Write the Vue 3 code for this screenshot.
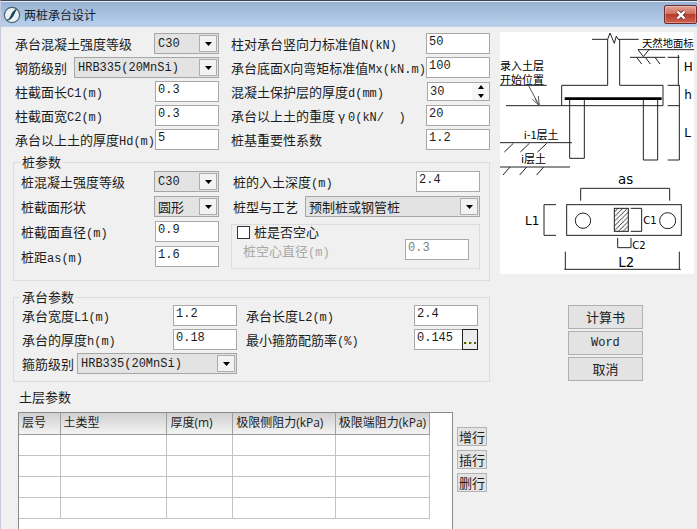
<script setup>
import { h, ref } from 'vue'

// Splits a caption so that Chinese, Latin and Greek runs can be sized separately.
const Caption = (props) => {
  const runs = props.text.match(/γ|[\x20-\x7e]+|[^\x20-\x7eγ]+/g) || []
  return h(
    props.tag || 'label',
    { class: 'caption' },
    runs.map((run) => {
      if (run === 'γ') return h('span', { class: 'greek' }, run)
      return /^[\x20-\x7e]/.test(run) ? h('span', { class: 'latin' }, run) : run
    })
  )
}
Caption.props = ['text', 'tag']

const leftInputs = ref([
  { id: 'c1', label: '柱截面长C1(m)', value: '0.3' },
  { id: 'c2', label: '柱截面宽C2(m)', value: '0.3' },
  { id: 'hd', label: '承台以上土的厚度Hd(m)', value: '5' },
])
const loadInputs = ref([
  { id: 'n', label: '柱对承台竖向力标准值N(kN)', value: '50' },
  { id: 'mx', label: '承台底面X向弯矩标准值Mx(kN.m)', value: '100' },
])
const cover = ref(30)
const factorInputs = ref([
  { id: 'gamma', label: '承台以上土的重度γ0(kN/  )', value: '20' },
  { id: 'importance', label: '桩基重要性系数', value: '1.2' },
])
const pileInputs = ref([
  { id: 'diameter', label: '桩截面直径(m)', value: '0.9' },
  { id: 'spacing', label: '桩距as(m)', value: '1.6' },
])
const capInputs = ref([
  { id: 'l1', label: '承台宽度L1(m)', value: '1.2' },
  { id: 'h', label: '承台的厚度h(m)', value: '0.18' },
])
const depth = ref('2.4')
const hollow = ref(false)
const hollowDiameter = ref('0.3')
const capLength = ref('2.4')
const ratio = ref('0.145')

const columns = ['层号', '土类型', '厚度(m)', '极限侧阻力(kPa)', '极限端阻力(kPa)']
const rows = ref([1, 2, 3, 4])
let nextRow = 5
const addRow = () => rows.value.push(nextRow++)
const insertRow = () => rows.value.unshift(nextRow++)
const removeRow = () => rows.value.pop()
</script>

<template>
  <div class="window">
    <header class="titlebar">
      <svg class="app-icon" viewBox="0 0 18 18" aria-hidden="true">
        <circle cx="9" cy="9" r="7.6" fill="#e9f1f4" stroke="#4c6470" stroke-width="1.2" />
        <path d="M4 14.2C8.6 13 7.6 5.4 13.6 3.2C10.8 6.4 10.6 13.4 4 14.2Z" fill="#17414f" stroke="#17414f" stroke-width=".8" />
      </svg>
      <h1>两桩承台设计</h1>
      <button type="button" class="close" aria-label="关闭">
        <svg viewBox="0 0 14 12" aria-hidden="true">
          <path d="M3.5 2.5L10.5 9.5M10.5 2.5L3.5 9.5" stroke="#6b3a38" stroke-width="4.2" />
          <path d="M3.5 2.5L10.5 9.5M10.5 2.5L3.5 9.5" stroke="#fff" stroke-width="2.4" />
        </svg>
      </button>
    </header>

    <main class="body">
      <form class="form" @submit.prevent>
        <section class="pair general">
          <div class="stack">
            <div class="row">
              <Caption text="承台混凝土强度等级" for="grade" />
              <span class="combo short">
                <select id="grade"><option>C30</option></select>
                <i class="arrow"><svg viewBox="0 0 7 4"><path d="M0 0H7L3.5 4Z" /></svg></i>
              </span>
            </div>
            <div class="row">
              <Caption text="钢筋级别" for="steel" />
              <span class="combo">
                <select id="steel"><option>HRB335(20MnSi)</option></select>
                <i class="arrow"><svg viewBox="0 0 7 4"><path d="M0 0H7L3.5 4Z" /></svg></i>
              </span>
            </div>
            <div v-for="f in leftInputs" :key="f.id" class="row">
              <Caption :text="f.label" :for="f.id" />
              <input :id="f.id" v-model="f.value" class="field" type="text" />
            </div>
          </div>
          <div class="stack">
            <div v-for="f in loadInputs" :key="f.id" class="row">
              <Caption :text="f.label" :for="f.id" />
              <input :id="f.id" v-model="f.value" class="field" type="text" />
            </div>
            <div class="row">
              <Caption text="混凝土保护层的厚度d(mm)" for="cover" />
              <span class="spin">
                <input id="cover" v-model="cover" type="text" />
                <span class="steps">
                  <button type="button" aria-label="增加" @click="cover++"><svg viewBox="0 0 6 4"><path d="M0 4H6L3 0Z" /></svg></button>
                  <button type="button" aria-label="减少" @click="cover--"><svg viewBox="0 0 6 4"><path d="M0 0H6L3 4Z" /></svg></button>
                </span>
              </span>
            </div>
            <div v-for="f in factorInputs" :key="f.id" class="row">
              <Caption :text="f.label" :for="f.id" />
              <input :id="f.id" v-model="f.value" class="field" type="text" />
            </div>
          </div>
        </section>

        <fieldset class="group pile">
          <legend>桩参数</legend>
          <div class="pair">
            <div class="stack">
              <div class="row">
                <Caption text="桩混凝土强度等级" for="pile-grade" />
                <span class="combo short">
                  <select id="pile-grade"><option>C30</option></select>
                  <i class="arrow"><svg viewBox="0 0 7 4"><path d="M0 0H7L3.5 4Z" /></svg></i>
                </span>
              </div>
              <div class="row">
                <Caption text="桩截面形状" for="shape" />
                <span class="combo short han">
                  <select id="shape"><option>圆形</option></select>
                  <i class="arrow"><svg viewBox="0 0 7 4"><path d="M0 0H7L3.5 4Z" /></svg></i>
                </span>
              </div>
              <div v-for="f in pileInputs" :key="f.id" class="row">
                <Caption :text="f.label" :for="f.id" />
                <input :id="f.id" v-model="f.value" class="field" type="text" />
              </div>
            </div>
            <div class="stack">
              <div class="row indent">
                <Caption text="桩的入土深度(m)" for="depth" />
                <input id="depth" v-model="depth" class="field" type="text" />
              </div>
              <div class="row indent">
                <Caption text="桩型与工艺" for="craft" />
                <span class="combo han">
                  <select id="craft"><option>预制桩或钢管桩</option></select>
                  <i class="arrow"><svg viewBox="0 0 7 4"><path d="M0 0H7L3.5 4Z" /></svg></i>
                </span>
              </div>
              <div class="hollow">
                <div class="check">
                  <input id="hollow" v-model="hollow" type="checkbox" />
                  <Caption text="桩是否空心" for="hollow" />
                </div>
                <div class="row off">
                  <Caption text="桩空心直径(m)" for="hollow-d" />
                  <input id="hollow-d" v-model="hollowDiameter" class="field" type="text" :disabled="!hollow" />
                </div>
              </div>
            </div>
          </div>
        </fieldset>

        <fieldset class="group cap">
          <legend>承台参数</legend>
          <div class="pair">
            <div class="stack">
              <div v-for="f in capInputs" :key="f.id" class="row">
                <Caption :text="f.label" :for="f.id" />
                <input :id="f.id" v-model="f.value" class="field" type="text" />
              </div>
              <div class="row">
                <Caption text="箍筋级别" for="stirrup" />
                <span class="combo">
                  <select id="stirrup"><option>HRB335(20MnSi)</option></select>
                  <i class="arrow"><svg viewBox="0 0 7 4"><path d="M0 0H7L3.5 4Z" /></svg></i>
                </span>
              </div>
            </div>
            <div class="stack">
              <div class="row">
                <Caption text="承台长度L2(m)" for="l2" />
                <input id="l2" v-model="capLength" class="field" type="text" />
              </div>
              <div class="row">
                <Caption text="最小箍筋配筋率(%)" for="ratio" />
                <span class="browse">
                  <input id="ratio" v-model="ratio" class="field" type="text" />
                  <button type="button" aria-label="选择">
                    <svg viewBox="0 0 12 3" aria-hidden="true">
                      <path d="M0 0H2V2H0ZM5 0H7V2H5ZM10 0H12V2H10Z" fill="#4c5a10" />
                      <path d="M2 0H3V2H2ZM7 0H8V2H7Z" fill="#c9d23c" />
                    </svg>
                  </button>
                </span>
              </div>
            </div>
          </div>
        </fieldset>

        <section class="soil">
          <h2>土层参数</h2>
          <div class="soil-row">
            <div class="sheet">
              <table>
                <colgroup>
                  <col class="w-no" /><col class="w-type" /><col class="w-thick" /><col class="w-side" /><col class="w-end" />
                </colgroup>
                <thead>
                  <tr><th v-for="c in columns" :key="c" scope="col">{{ c }}</th></tr>
                </thead>
                <tbody>
                  <tr v-for="r in rows" :key="r"><td v-for="c in columns" :key="c"></td></tr>
                </tbody>
              </table>
            </div>
            <div class="row-tools">
              <button type="button" @click="addRow">增行</button>
              <button type="button" @click="insertRow">插行</button>
              <button type="button" @click="removeRow">删行</button>
            </div>
          </div>
        </section>
      </form>

      <aside class="side">
        <svg class="diagram" viewBox="15 96 582 726" role="img" aria-label="两桩承台示意图">
          <defs>
            <pattern id="hatch" width="14" height="14" patternUnits="userSpaceOnUse">
              <path d="M-2 16L16 -2M-2 2L2 -2M12 16L16 12" stroke="#222" stroke-width="2.6" />
              <path d="M7 7v3M2 3h2" stroke="#666" stroke-width="2" />
            </pattern>
          </defs>
          <g class="lines">
            <path d="M291 118H338L345 99L358 130L364 108L369 118H431" />
            <path d="M338 118V256H200V317M374 118V256H504V317M33 317H504" />
            <path d="M209 296H500" class="bar" />
            <path d="M224 300V475H268V300M445 300V480H488V300" />
            <path d="M429 149H597M429 149L445 170L462 149M405 172H511" />
            <path d="M425 172L440 192M451 172L466 192M480 172L495 192" />
            <path d="M518 172H554M550 165V256M518 256H554M518 317H554M553 256V480H518" />
            <path d="M15 256H155" />
            <path d="M100 256L133 317M112 298L133 317L130 288M120 296L133 317" class="pointer" />
            <path d="M15 428H231M55 430L28 456M103 430L76 456M155 430L128 456" />
            <path d="M15 501H225M45 501L24 525M95 501L74 525M146 501L125 525" />
            <path d="M257 602V565H524V602" />
            <rect x="215" y="614" width="344" height="92" />
            <circle cx="264" cy="662" r="23" />
            <circle cx="518" cy="662" r="24" />
            <rect x="358" y="625" width="42" height="69" class="hatched" />
            <path d="M407 625H440V694H407" />
            <path d="M183 614H147V706H183" />
            <path d="M368 714V743H408V714" />
            <path d="M211 755V808M553 755V808M208 808H557" />
          </g>
          <g class="han-note">
            <text x="441" y="142" class="ground">天然地面标</text>
            <text x="15" y="209">录入土层</text>
            <text x="15" y="253">开始位置</text>
            <text x="86" y="416">i-1层土</text>
            <text x="78" y="488">i层土</text>
          </g>
          <g class="dim">
            <text x="566" y="214">H</text>
            <text x="568" y="297">h</text>
            <text x="568" y="411">L</text>
            <text x="369" y="553" class="wide">as</text>
            <text x="90" y="675">L1</text>
            <text x="370" y="800" class="wide">L2</text>
            <text x="445" y="671" class="small">C1</text>
            <text x="412" y="746" class="small">C2</text>
          </g>
        </svg>
        <div class="actions">
          <button type="button">计算书</button>
          <button type="button" class="word">Word</button>
          <button type="button">取消</button>
        </div>
      </aside>
    </main>
  </div>
</template>

<style>
body {
  margin: 0;
  background: #f0f0f0;
}
</style>

<style scoped>
.window {
  --han: "Noto Sans CJK SC", sans-serif;
  --mono: "Liberation Mono", "Noto Sans CJK SC", monospace;
  box-sizing: border-box;
  min-height: 100vh;
  display: flex;
  flex-direction: column;
  border-top: 1px solid #3c4450;
  border-left: 1px solid #c5cbdc;
  background: #f0f0f0;
  color: #1c1c1c;
  font: 13px/20px var(--han);
}
.window *, .window *::before {
  box-sizing: border-box;
}
button, input, select {
  margin: 0;
  padding: 0;
  border-radius: 0;
  color: inherit;
  font: inherit;
}
.titlebar {
  display: flex;
  align-items: center;
  height: 26px;
  padding-left: 2px;
  border-top: 1px solid #e6edf6;
  background: linear-gradient(#98b2d3, #b9d1ec);
}
.app-icon {
  width: 18px;
  height: 18px;
}
.titlebar h1 {
  margin: 0 auto 0 3px;
  color: #141c2a;
  font-size: 12px;
  font-weight: 400;
}
.close {
  display: grid;
  place-items: center;
  width: 33px;
  height: 19px;
  border: 1px solid #6d2b2b;
  border-radius: 2px;
  background: linear-gradient(#e2a396, #d0705e 45%, #b93c2a 50%, #cf6150);
  box-shadow: inset 0 0 0 1px rgba(255, 255, 255, .3);
}
.close svg {
  width: 14px;
  height: 12px;
  fill: none;
}
.body {
  flex: 1;
  display: grid;
  grid-template-columns: minmax(0, 477fr) minmax(0, 194fr);
  gap: 10px;
  padding: 5px 3px 0 12px;
}
.form {
  display: flex;
  flex-direction: column;
}
.pair {
  display: grid;
  grid-template-columns: minmax(0, 204fr) minmax(0, 259fr);
  gap: 12px;
}
.general {
  padding: 1px 0 0 2px;
}
.stack {
  display: flex;
  flex-direction: column;
  gap: 3px;
}
.row {
  display: flex;
  align-items: center;
  justify-content: space-between;
  height: 21px;
}
.caption {
  white-space: pre;
}
.caption :deep(.latin) {
  font: 12px/14px var(--mono);
}
.caption :deep(.greek) {
  display: inline-block;
  width: 13px;
  text-align: center;
}
.field {
  width: 64px;
  height: 21px;
  padding: 0 2px 3px;
  border: 1px solid #a9a9a9;
  background: #fff;
  font: 12px/16px var(--mono);
}
.combo {
  display: grid;
  flex: 1;
  height: 21px;
  margin-left: 7px;
}
.combo.short {
  flex: none;
  width: 65px;
}
.combo select {
  grid-area: 1 / 1;
  width: 100%;
  height: 21px;
  padding: 0 20px 0 3px;
  border: 1px solid #a6a6a6;
  background: #e3e3e3;
  appearance: none;
  font: 12px/18px var(--mono);
}
.combo.han select {
  font: 13px/18px var(--han);
}
.arrow {
  grid-area: 1 / 1;
  place-self: center end;
  display: grid;
  place-items: center;
  width: 18px;
  height: 17px;
  margin-right: 2px;
  border: 1px solid #adadad;
  background: #f2f2f2;
  pointer-events: none;
}
.arrow svg {
  width: 7px;
  height: 4px;
}
.spin {
  display: flex;
  width: 63px;
  height: 19px;
  border: 1px solid #a9a9a9;
  background: #fff;
}
.spin input {
  flex: 1;
  min-width: 0;
  padding: 0 2px;
  border: 0;
  background: none;
  font: 12px/16px var(--mono);
}
.steps {
  display: flex;
  flex-direction: column;
  width: 17px;
  background: #f6f6f6;
}
.steps button {
  flex: 1;
  display: grid;
  place-items: center;
  border: 0;
  background: none;
}
.steps svg {
  width: 6px;
  height: 4px;
}
.group {
  min-width: 0;
  margin: 4px 0 0;
  padding: 1px 9px 11px 7px;
  border: 1px solid #dcdcdc;
}
.group legend {
  margin-left: -1px;
  padding: 0 2px;
  line-height: 16px;
}
.pile .pair {
  grid-template-columns: minmax(0, 198fr) minmax(0, 249fr);
}
.pile .stack {
  gap: 4px;
}
.indent {
  padding-left: 2px;
}
.hollow {
  margin-top: 3px;
  padding: 0 10px 8px 5px;
  border: 1px solid #dcdcdc;
}
.check {
  display: flex;
  align-items: center;
  gap: 4px;
  height: 14px;
}
.check input {
  width: 13px;
  height: 13px;
  border: 1px solid #333;
  background: #fff;
  appearance: none;
}
.check input:checked {
  background: #333;
  box-shadow: inset 0 0 0 2px #fff;
}
.check .caption {
  line-height: 14px;
}
.off {
  align-items: flex-end;
  padding-left: 6px;
  color: #a8a8a8;
}
.off .caption {
  line-height: 16px;
}
.off .field {
  color: #808080;
}
.group.cap {
  margin-top: 8px;
  padding: 0 11px 7px 8px;
}
.cap legend {
  margin-left: -2px;
}
.cap .pair {
  grid-template-columns: minmax(0, 215fr) minmax(0, 232fr);
  gap: 9px;
}
.cap .combo {
  margin-left: 3px;
}
.browse {
  display: flex;
  width: 64px;
}
.browse .field {
  flex: 1;
  min-width: 0;
  border-right: 0;
}
.browse button {
  display: grid;
  place-items: end center;
  width: 16px;
  height: 21px;
  padding-bottom: 4px;
  border: 1px solid #222;
  background: #ececec;
}
.browse svg {
  width: 12px;
  height: 3px;
}
.soil {
  flex: 1;
  display: flex;
  flex-direction: column;
  padding: 5px 3px 0 5px;
}
.soil h2 {
  margin: 0 0 5px 1px;
  font-size: 13px;
  font-weight: 400;
  line-height: 20px;
}
.soil-row {
  flex: 1;
  display: flex;
  gap: 4px;
}
.sheet {
  flex: 1;
  border: 1px solid #8a8a8a;
  border-bottom: 0;
  background: #fff;
}
table {
  width: 95%;
  border-collapse: collapse;
  table-layout: fixed;
}
.w-no { width: 10%; }
.w-type { width: 26%; }
.w-thick { width: 16%; }
.w-side { width: 25%; }
.w-end { width: 23%; }
th {
  height: 21px;
  padding: 0 0 0 3px;
  border-right: 1px solid #a0a0a0;
  border-bottom: 1px solid #9a9a9a;
  background: linear-gradient(#cfcfcf, #f3f3f3);
  font: 12px/18px "Open Sans", var(--han);
  text-align: left;
  white-space: nowrap;
}
td {
  height: 21px;
  padding: 0;
  border-right: 1px solid #c2c2c2;
  border-bottom: 1px solid #c2c2c2;
}
.row-tools {
  display: flex;
  flex-direction: column;
  gap: 4px;
  padding-top: 15px;
}
.row-tools button {
  width: 30px;
  height: 19px;
  border: 1px solid #b4b4b4;
  background: #e3e3e3;
  line-height: 16px;
}
.side {
  display: flex;
  flex-direction: column;
  gap: 31px;
}
.diagram {
  width: 100%;
  background: #fff;
}
.lines {
  fill: none;
  stroke: #222;
  stroke-width: 3;
}
.lines .bar {
  stroke: #000;
  stroke-width: 8;
}
.lines .pointer {
  stroke: #555;
}
.lines .hatched {
  fill: url(#hatch);
}
.han-note text {
  font: 33px var(--han);
}
.han-note .ground {
  font-size: 31px;
}
.dim text {
  font: 36px "DejaVu Sans", sans-serif;
}
.dim .wide {
  font-size: 40px;
}
.dim .small {
  font-size: 30px;
}
.actions {
  display: flex;
  flex-direction: column;
  gap: 2px;
  width: 75px;
  margin-left: 35%;
}
.actions button {
  height: 24px;
  border: 1px solid #b0b0b0;
  background: #e3e3e3;
  line-height: 18px;
}
.actions .word {
  font: 12px/18px var(--mono);
}
</style>
